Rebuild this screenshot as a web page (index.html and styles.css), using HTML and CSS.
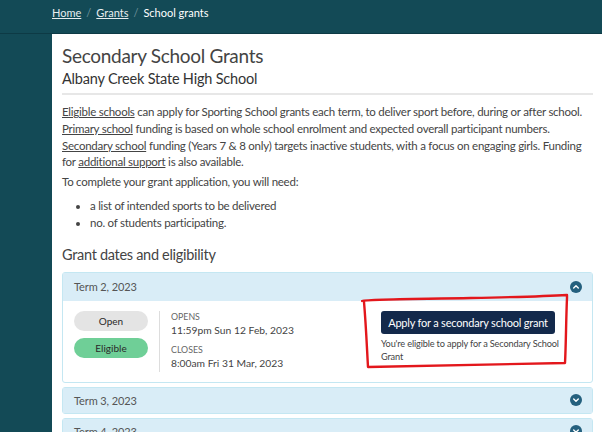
FILE: index.html
```html
<!DOCTYPE html>
<html>
<head>
<meta charset="utf-8">
<link rel="stylesheet" href="styles.css">
</head>
<body>
<div class="topbar">
  <nav class="crumbs"><a href="#">Home</a><span class="sep">/</span><a href="#">Grants</a><span class="sep">/</span><span class="current">School grants</span></nav>
</div>
<main class="card">
  <h1 class="title">Secondary School Grants</h1>
  <div class="subtitle">Albany Creek State High School</div>
  <hr class="rule">
  <p class="intro"><a href="#">Eligible schools</a> can apply for Sporting School grants each term, to deliver sport before, during or after school.<br><a href="#">Primary school</a> funding is based on whole school enrolment and expected overall participant numbers.<br><a href="#">Secondary school</a> funding (Years 7 &amp; 8 only) targets inactive students, with a focus on engaging girls. Funding<br>for <a href="#">additional support</a> is also available.</p>
  <p class="intro lead">To complete your grant application, you will need:</p>
  <ul class="needs">
    <li>a list of intended sports to be delivered</li>
    <li>no. of students participating.</li>
  </ul>
  <h2 class="section">Grant dates and eligibility</h2>
  <div class="panel">
    <div class="panel-head"><span>Term 2, 2023</span><span class="toggle"><svg viewBox="0 0 12 12" width="12" height="12"><circle cx="6" cy="6" r="6" fill="#24607e"/><path d="M3.7 7.1 6 4.8 8.3 7.1" fill="none" stroke="#fff" stroke-width="1.4" stroke-linecap="round" stroke-linejoin="round"/></svg></span></div>
    <div class="panel-body">
      <div class="badges">
        <span class="pill pill-open">Open</span>
        <span class="pill pill-elig">Eligible</span>
      </div>
      <div class="dates">
        <div class="lbl">OPENS</div>
        <div class="val">11:59pm Sun 12 Feb, 2023</div>
        <div class="lbl lbl2">CLOSES</div>
        <div class="val">8:00am Fri 31 Mar, 2023</div>
      </div>
      <div class="apply">
        <button class="btn">Apply for a secondary school grant</button>
        <div class="note">You're eligible to apply for a Secondary School Grant</div>
      </div>
      <svg class="markup" viewBox="0 0 212 82" width="212" height="82">
        <path d="M1 11 C 3 9, 60 9, 110 8 C 160 7, 190 6, 206 5 L 206 8 C 205 30, 205 55, 204 73 C 150 74, 80 75, 7 77 C 6 60, 5 35, 3 12" fill="none" stroke="#e3171c" stroke-width="2.4" stroke-linecap="round" stroke-linejoin="round"/>
      </svg>
    </div>
  </div>
  <div class="panel closed">
    <div class="panel-head"><span>Term 3, 2023</span><span class="toggle"><svg viewBox="0 0 12 12" width="12" height="12"><circle cx="6" cy="6" r="6" fill="#24607e"/><path d="M3.7 4.9 6 7.2 8.3 4.9" fill="none" stroke="#fff" stroke-width="1.4" stroke-linecap="round" stroke-linejoin="round"/></svg></span></div>
  </div>
  <div class="panel closed">
    <div class="panel-head"><span>Term 4, 2023</span><span class="toggle"><svg viewBox="0 0 12 12" width="12" height="12"><circle cx="6" cy="6" r="6" fill="#24607e"/><path d="M3.7 4.9 6 7.2 8.3 4.9" fill="none" stroke="#fff" stroke-width="1.4" stroke-linecap="round" stroke-linejoin="round"/></svg></span></div>
  </div>
</main>
</body>
</html>
```
FILE: styles.css
```css
html, body {
  margin: 0;
  padding: 0;
  background: #134a56;
  overflow: hidden;
  height: 432px;
}
body {
  font-family: Lato, "Open Sans", sans-serif;
  color: #444;
}
.topbar {
  height: 34px;
  border-bottom: 1px solid #0d3a45;
  padding: 5px 0 0 52px;
  box-sizing: border-box;
}
.crumbs {
  font-size: 11px;
  line-height: 15px;
  color: #fff;
  display: flex;
}
.crumbs a {
  color: #e6edef;
  text-decoration: underline;
}
.crumbs .sep {
  color: #6f929b;
  padding: 0 5px;
}
.card {
  display: block;
  margin-left: 52px;
  background: #fff;
  padding: 9px 9px 0 10px;
  height: 400px;
}
.title {
  margin: 0;
  font-weight: 400;
  font-size: 19px;
  letter-spacing: -0.3px;
  line-height: 26px;
  color: #444;
}
.subtitle {
  font-size: 14.5px;
  letter-spacing: -0.2px;
  line-height: 19px;
  color: #333;
}
.rule {
  border: 0;
  border-top: 2px solid #e7e7e7;
  margin: 5px 0 9px;
}
.intro {
  margin: 0 0 3px;
  font-size: 11.5px;
  letter-spacing: -0.25px;
  line-height: 16.8px;
  white-space: nowrap;
}
.intro a {
  color: #444;
}
.lead {
  margin-bottom: 7px;
}
.needs {
  margin: 0 0 13px;
  padding-left: 28px;
  font-size: 11.5px;
  letter-spacing: -0.25px;
  line-height: 16.8px;
}
.section {
  margin: 0 0 7px;
  font-weight: 400;
  font-size: 14.5px;
  letter-spacing: -0.3px;
  line-height: 20px;
  color: #444;
}
.panel {
  border: 1px solid #c4e7f2;
  border-radius: 3px;
  margin-bottom: 4px;
}
.panel-head {
  background: #d9edf7;
  height: 28px;
  padding: 0 10px 0 11px;
  display: flex;
  align-items: center;
  justify-content: space-between;
  font-size: 11px;
  letter-spacing: -0.1px;
  color: #555;
}
.toggle {
  display: flex;
}
.panel-body {
  position: relative;
  display: flex;
  padding: 10px 11px 10px;
  height: 61px;
}
.badges {
  width: 74px;
  display: flex;
  flex-direction: column;
  gap: 7px;
  padding-right: 11px;
  border-right: 1px solid #ddd;
}
.pill {
  display: flex;
  align-items: center;
  justify-content: center;
  height: 20px;
  border-radius: 10px;
  font-size: 10px;
  color: #2a2a2a;
}
.pill-open { background: #e4e4e4; }
.pill-elig { background: #6fcf97; }
.dates {
  padding-left: 11px;
  width: 210px;
}
.lbl {
  font-size: 8.8px;
  line-height: 12px;
  color: #666;
}
.lbl2 { margin-top: 6px; }
.val {
  font-size: 10.3px;
  line-height: 15px;
  color: #444;
}
.apply {
  width: 190px;
}
.btn {
  display: block;
  background: #13294b;
  color: #fff;
  border: 0;
  border-radius: 3px;
  height: 23px;
  width: 174px;
  padding: 0;
  font-family: inherit;
  font-size: 11px;
  letter-spacing: -0.2px;
  margin: 0 0 3px;
  white-space: nowrap;
}
.note {
  font-size: 9.2px;
  letter-spacing: -0.15px;
  line-height: 13px;
  color: #444;
  width: 185px;
}
.markup {
  position: absolute;
  left: 298px;
  top: -11px;
}
.closed .panel-head { height: 25px; }
```
